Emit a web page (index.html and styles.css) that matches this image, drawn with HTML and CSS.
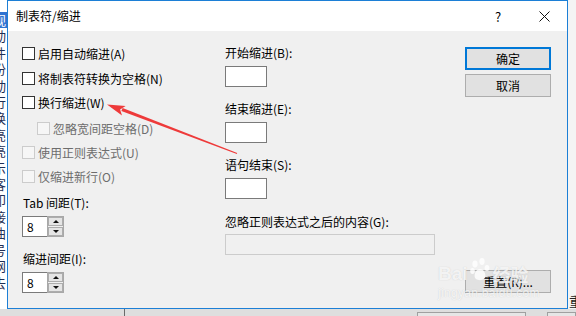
FILE: index.html
```html
<!DOCTYPE html>
<html lang="zh-CN">
<head>
    <meta charset="UTF-8">
    <meta name="viewport" content="width=device-width, initial-scale=1.0">
    <title>制表符/缩进</title>
    <link rel="stylesheet" href="styles.css">
</head>
<body>
    <div class="screen">
        <div class="desk">
            <div class="app-left">
                <span class="sel">视</span><span>动</span><span>件</span><span>份</span><span>动</span><span>行</span><span>换</span><span>亮</span><span>亮</span><span>示</span><span>客</span><span>印</span><span>接</span><span>曲</span><span>号</span><span>网</span><span>去</span>
            </div>

            <div class="dialog">
                <div class="titlebar">
                    <span class="title">制表符/缩进</span>
                    <span class="tb-btn">?</span>
                    <span class="tb-btn">
                        <svg width="11" height="11" viewBox="0 0 11 11"><path d="M0.5 0.5 L10.5 10.5 M10.5 0.5 L0.5 10.5" stroke="#111" stroke-width="1" fill="none"/></svg>
                    </span>
                </div>

                <div class="dlg-body">
                    <div class="col-left">
                        <label class="check r1"><span class="box"></span>启用自动缩进(A)</label>
                        <label class="check r2"><span class="box"></span>将制表符转换为空格(N)</label>
                        <label class="check r3"><span class="box"></span>换行缩进(W)</label>
                        <label class="check r4 sub off"><span class="box"></span>忽略宽间距空格(D)</label>
                        <label class="check r5 off"><span class="box"></span>使用正则表达式(U)</label>
                        <label class="check r6 off"><span class="box"></span>仅缩进新行(O)</label>

                        <div class="lbl tab-lbl">Tab 间距(T):</div>
                        <div class="spin">
                            <span class="spin-edit">8</span>
                            <span class="spin-btns">
                                <span class="spin-btn"><i class="tri-up"></i></span>
                                <span class="spin-btn"><i class="tri-down"></i></span>
                            </span>
                        </div>

                        <div class="lbl ind-lbl">缩进间距(I):</div>
                        <div class="spin">
                            <span class="spin-edit">8</span>
                            <span class="spin-btns">
                                <span class="spin-btn"><i class="tri-up"></i></span>
                                <span class="spin-btn"><i class="tri-down"></i></span>
                            </span>
                        </div>
                    </div>

                    <div class="col-mid">
                        <div class="lbl">开始缩进(B):</div>
                        <div class="edit"></div>
                        <div class="lbl gap">结束缩进(E):</div>
                        <div class="edit"></div>
                        <div class="lbl gap">语句结束(S):</div>
                        <div class="edit"></div>
                        <div class="lbl gap2">忽略正则表达式之后的内容(G):</div>
                        <div class="edit wide off"></div>
                    </div>

                    <div class="col-right">
                        <button class="btn default">确定</button>
                        <button class="btn">取消</button>
                        <button class="btn reset">重置(R)...</button>
                    </div>
                </div>
            </div>

            <div class="app-right"><span>重</span></div>
        </div>

        <div class="app-bottom">
            <span class="vline"></span>
            <span class="bbox b1"></span>
            <span class="bbox b2"></span>
        </div>

        <svg class="arrow" width="576" height="316" viewBox="0 0 576 316">
            <polygon points="121.4,111.1 122.6,108.1 237.2,153.0 236.8,154.0" fill="#ee3a3a"/>
            <polygon points="107,104.5 125.6,106.1 120.1,109.4 122,115.5" fill="#ee3a3a"/>
        </svg>

        <div class="watermark">
            <div class="wm-top">
                <span class="wm-bai">Bai</span>
                <svg class="wm-paw" width="20" height="24" viewBox="0 0 20 24">
                    <ellipse cx="5" cy="6" rx="2.6" ry="3.4"/>
                    <ellipse cx="12" cy="3.5" rx="2.6" ry="3.4"/>
                    <ellipse cx="17" cy="10" rx="2.4" ry="3"/>
                    <ellipse cx="2.5" cy="13" rx="2.3" ry="3"/>
                    <path d="M10 11 C5 11 3 19 6 21 C8 22.5 12 22.5 14 21 C17 19 15 11 10 11 Z"/>
                </svg>
                <span class="wm-jy">经验</span>
            </div>
            <div class="wm-url">jingyan.baidu.com</div>
        </div>
    </div>
</body>
</html>
```

FILE: styles.css
```css
body {
    margin: 0;
    font-family: "Noto Sans CJK SC", "Microsoft YaHei", sans-serif;
    font-size: 12px;
    color: #000;
    background-color: #f3f3f3;
}

.screen {
    position: relative;
    width: 576px;
    height: 316px;
    overflow: hidden;
}

.desk {
    display: flex;
    height: 309px;
}

.app-left {
    width: 7px;
    overflow: hidden;
    background-color: #fff;
    display: flex;
    flex-direction: column;
    align-items: flex-end;
    padding-top: 12px;
    box-sizing: border-box;
}

.app-left span {
    width: 14px;
    font-size: 13px;
    line-height: 16.4px;
    color: #1f2f55;
    flex: none;
}

.app-left .sel {
    background-color: #2f73d1;
    color: #fff;
}

.app-right {
    flex: 1;
    background-color: #f4f4f4;
    display: flex;
    flex-direction: column;
    justify-content: flex-end;
    overflow: hidden;
}

.app-right span {
    font-size: 14px;
    line-height: 16px;
    margin-left: 1px;
    color: #222;
}

.dialog {
    width: 561px;
    height: 309px;
    box-sizing: border-box;
    border: 1px solid #1c7fd6;
    background-color: #f0f0f0;
    display: flex;
    flex-direction: column;
}

.titlebar {
    height: 30px;
    background-color: #fff;
    display: flex;
    align-items: center;
}

.title {
    flex: 1;
    padding-left: 8px;
    line-height: 16px;
}

.tb-btn {
    width: 46px;
    height: 30px;
    display: flex;
    align-items: center;
    justify-content: center;
    font-size: 13px;
}

.dlg-body {
    flex: 1;
    display: grid;
    grid-template-columns: 203px 1fr 86px;
    padding: 14px 16px 15px 14px;
}

.col-left,
.col-mid {
    display: flex;
    flex-direction: column;
    align-items: flex-start;
}

.check {
    display: flex;
    align-items: center;
    height: 13px;
    line-height: 13px;
    white-space: nowrap;
}

.check .box {
    width: 13px;
    height: 13px;
    box-sizing: border-box;
    border: 1px solid #333;
    background-color: #fff;
    margin-right: 3px;
}

.check.off {
    color: #6d6d6d;
}

.check.off .box {
    border-color: #cccccc;
    background-color: #f6f6f6;
}

.check.sub {
    margin-left: 15px;
}

.r1 { margin-top: 2px; }
.r2 { margin-top: 12px; }
.r3 { margin-top: 11px; }
.r4 { margin-top: 13px; }
.r5 { margin-top: 11px; }
.r6 { margin-top: 11px; }

.lbl {
    line-height: 16px;
    white-space: nowrap;
}

.tab-lbl {
    margin-top: 12px;
    margin-left: 1px;
}

.ind-lbl {
    margin-top: 14px;
    margin-left: 1px;
}

.spin {
    display: flex;
    height: 21px;
    margin-top: 5px;
}

.spin-edit {
    width: 25px;
    box-sizing: border-box;
    border: 1px solid #7a7a7a;
    border-right: none;
    background-color: #fff;
    padding-left: 4px;
    line-height: 19px;
    font-size: 12px;
}

.spin-btns {
    width: 17px;
    box-sizing: border-box;
    border: 1px solid #a8a8a8;
    display: flex;
    flex-direction: column;
    gap: 1px;
    background-color: #f0f0f0;
}

.spin-btn {
    flex: 1;
    box-sizing: border-box;
    border: 1px solid #adadad;
    background-color: #e5e5e5;
    display: flex;
    align-items: center;
    justify-content: center;
}

.tri-up,
.tri-down {
    width: 0;
    height: 0;
    border-left: 3px solid transparent;
    border-right: 3px solid transparent;
}

.tri-up {
    border-bottom: 3px solid #111;
}

.tri-down {
    border-top: 3px solid #111;
}

.col-mid .lbl.gap {
    margin-top: 14px;
}

.col-mid .lbl.gap2 {
    margin-top: 15px;
}

.edit {
    width: 42px;
    height: 21px;
    box-sizing: border-box;
    border: 1px solid #7a7a7a;
    background-color: #fff;
    margin-top: 5px;
}

.edit.wide {
    width: 210px;
    margin-top: 4px;
}

.edit.off {
    border-color: #cccccc;
    background-color: #f0f0f0;
}

.col-right {
    display: flex;
    flex-direction: column;
    gap: 4px;
    padding-top: 2px;
}

.btn {
    height: 23px;
    box-sizing: border-box;
    border: 1px solid #adadad;
    background-color: #e1e1e1;
    font-family: inherit;
    font-size: 12px;
    color: #000;
    padding: 0;
}

.btn.default {
    border: 2px solid #0078d7;
}

.btn.reset {
    margin-top: auto;
}

.app-bottom {
    height: 7px;
    background-color: #dedede;
    display: flex;
    align-items: flex-start;
}

.vline {
    width: 1px;
    height: 7px;
    background-color: #6a6a6a;
    margin-left: 124px;
}

.bbox {
    height: 7px;
    box-sizing: border-box;
    border: 1px solid #a0a0a0;
    border-bottom: none;
    margin-top: 3px;
    background-color: #e6e6e6;
}

.b1 {
    width: 113px;
    margin-left: 292px;
}

.b2 {
    width: 30px;
    margin-left: 21px;
}

.arrow {
    position: absolute;
    left: 0;
    top: 0;
}

.watermark {
    position: absolute;
    left: 438px;
    top: 256px;
    color: rgba(255, 255, 255, 0.8);
    text-shadow: 0 0 1px rgba(120, 120, 120, 0.35);
}

.wm-top {
    display: flex;
    align-items: flex-end;
    height: 28px;
}

.wm-bai {
    font-family: "Liberation Sans", Arial, sans-serif;
    font-weight: bold;
    font-size: 19px;
    line-height: 20px;
}

.wm-paw {
    fill: rgba(255, 255, 255, 0.8);
    margin: 0 3px 2px 2px;
}

.wm-jy {
    font-size: 18px;
    line-height: 20px;
    font-weight: bold;
}

.wm-url {
    font-family: "Liberation Sans", Arial, sans-serif;
    font-size: 12px;
    line-height: 14px;
    letter-spacing: 0.3px;
    margin-top: 2px;
}
```
